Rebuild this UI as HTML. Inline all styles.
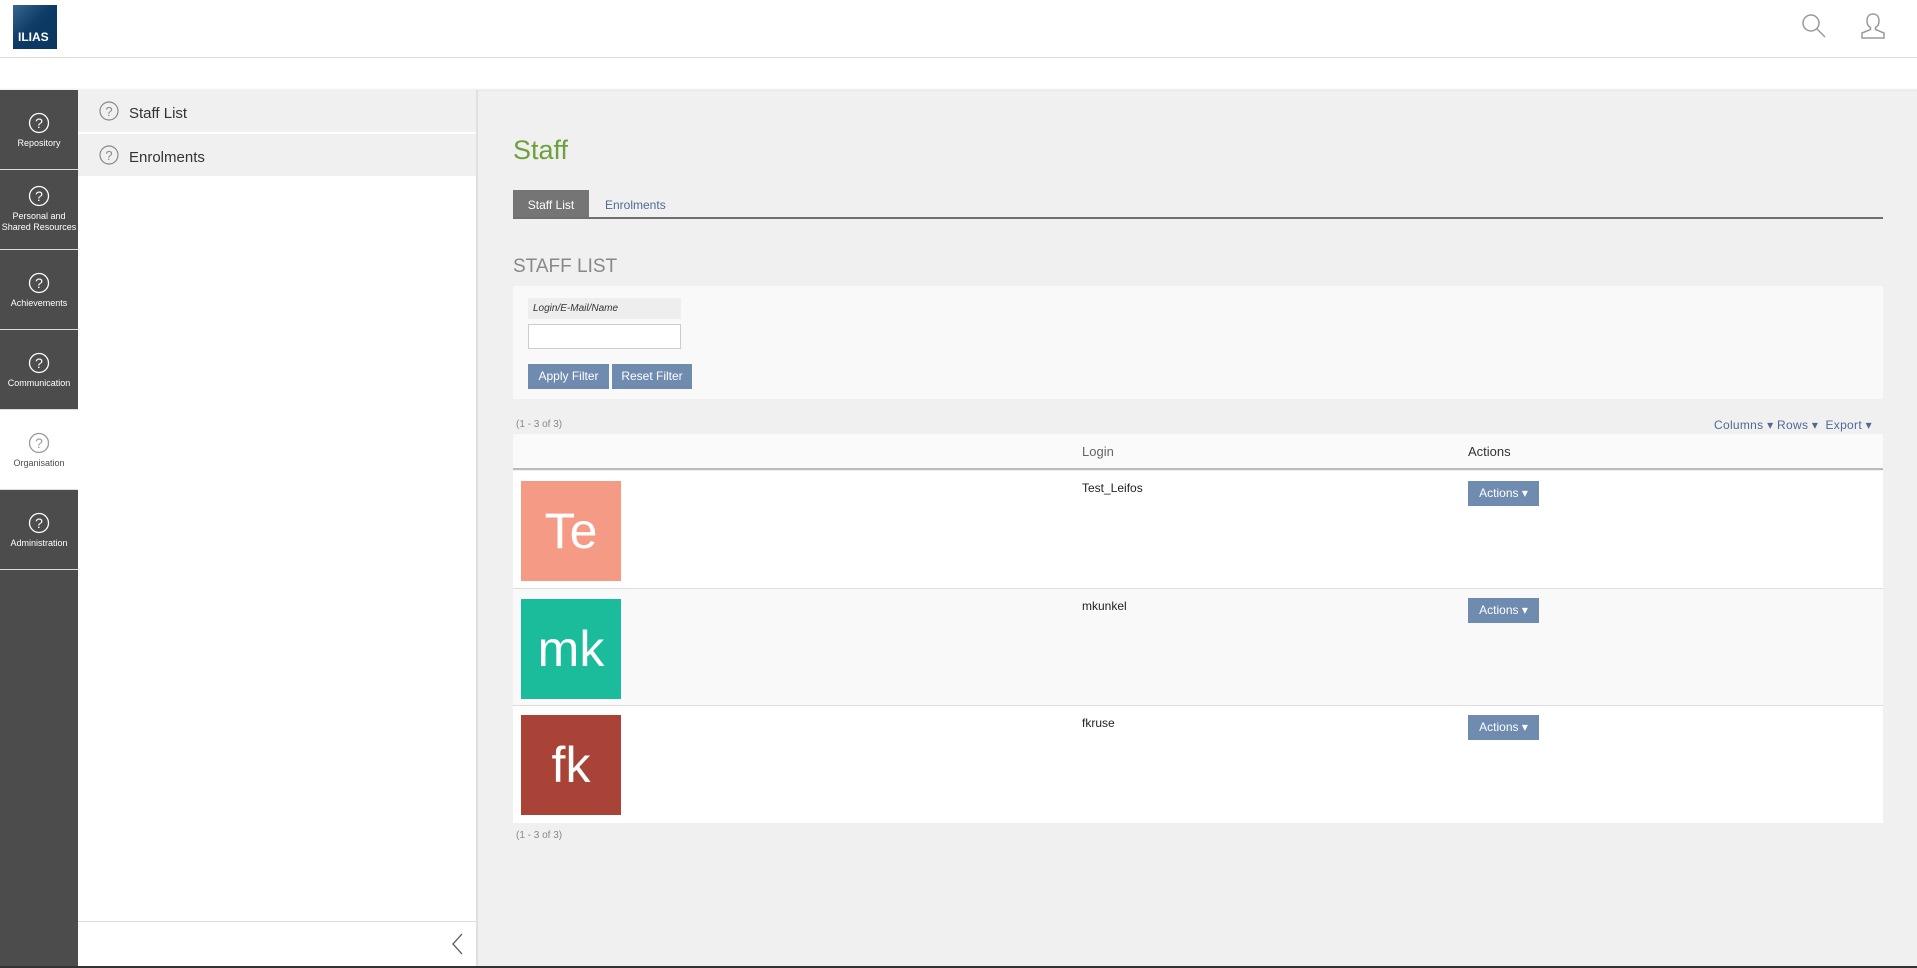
<!DOCTYPE html>
<html><head><meta charset="utf-8"><style>
*{margin:0;padding:0;box-sizing:border-box}
body{width:1917px;height:968px;overflow:hidden;background:#fff;font-family:"Liberation Sans",sans-serif;position:relative}
.a{position:absolute}
.nav{position:absolute;left:0;width:78px;background:#4c4c4c;color:#fff;text-align:center;font-size:9px;line-height:11px;border-bottom:1px solid #ddd;white-space:nowrap}
.nav svg{display:block;margin:0 auto 4px}
.btn{position:absolute;background:#6f8bb0;color:#fff;font-size:12px;line-height:25px;text-align:center}
.row{position:absolute;left:513px;width:1370px;border-bottom:1px solid #ddd}
.av{position:absolute;left:8px;top:10px;width:100px;height:100px;color:#fff;font-size:50px;line-height:100px;text-align:center}
.login{position:absolute;left:569px;top:10px;font-size:12px;color:#222}
</style></head><body>
<div class="a" style="left:13px;top:5px;width:44px;height:44px;background:linear-gradient(135deg,#3a6591 0%,#0d3a66 45%,#0b3660 100%)"></div>
<div class="a" style="left:18px;top:30px;color:#fff;font-weight:bold;font-size:12px">ILIAS</div>
<div class="a" style="left:0;top:57px;width:1917px;height:1px;background:#ddd"></div>
<svg class="a" style="left:1800px;top:12px" width="28" height="28" viewBox="0 0 28 28" fill="none" stroke="#999" stroke-width="1.5"><circle cx="11" cy="11" r="8"/><path d="M17 17l8 8"/></svg>
<svg class="a" style="left:1860px;top:12px" width="26" height="28" viewBox="0 0 26 28" fill="none" stroke="#999" stroke-width="1.5"><path d="M13 2c-4 0-6 3-6 7 0 3 1.5 5.5 3.5 6.5v2L2 21v5h22v-5l-8.5-3.5v-2c2-1 3.5-3.5 3.5-6.5 0-4-2-7-6-7z"/></svg>
<div class="a" style="left:0;top:90px;width:1917px;height:878px;background:#f0f0f0"></div>
<div class="a" style="left:0;top:88px;width:1917px;height:3px;background:linear-gradient(#fff,#e4e4e4)"></div>
<div class="a" style="left:0;top:90px;width:78px;height:878px;background:#4c4c4c"></div>
<div class="nav" style="top:90px;height:80px;padding-top:22px"><svg width="22" height="22" viewBox="0 0 22 22"><circle cx="11" cy="11" r="9.5" fill="none" stroke="#fff" stroke-width="1.3"/><text x="11" y="16" fill="#fff" font-size="14" text-anchor="middle" font-family="Liberation Sans">?</text></svg>Repository</div>
<div class="nav" style="top:170px;height:80px;padding-top:15px"><svg width="22" height="22" viewBox="0 0 22 22"><circle cx="11" cy="11" r="9.5" fill="none" stroke="#fff" stroke-width="1.3"/><text x="11" y="16" fill="#fff" font-size="14" text-anchor="middle" font-family="Liberation Sans">?</text></svg>Personal and<br>Shared Resources</div>
<div class="nav" style="top:250px;height:80px;padding-top:22px"><svg width="22" height="22" viewBox="0 0 22 22"><circle cx="11" cy="11" r="9.5" fill="none" stroke="#fff" stroke-width="1.3"/><text x="11" y="16" fill="#fff" font-size="14" text-anchor="middle" font-family="Liberation Sans">?</text></svg>Achievements</div>
<div class="nav" style="top:330px;height:80px;padding-top:22px"><svg width="22" height="22" viewBox="0 0 22 22"><circle cx="11" cy="11" r="9.5" fill="none" stroke="#fff" stroke-width="1.3"/><text x="11" y="16" fill="#fff" font-size="14" text-anchor="middle" font-family="Liberation Sans">?</text></svg>Communication</div>
<div class="nav" style="top:410px;height:80px;padding-top:22px;background:#fff;color:#4c4c4c"><svg width="22" height="22" viewBox="0 0 22 22"><circle cx="11" cy="11" r="9.5" fill="none" stroke="#999" stroke-width="1.3"/><text x="11" y="16" fill="#999" font-size="14" text-anchor="middle" font-family="Liberation Sans">?</text></svg>Organisation</div>
<div class="nav" style="top:490px;height:80px;padding-top:22px"><svg width="22" height="22" viewBox="0 0 22 22"><circle cx="11" cy="11" r="9.5" fill="none" stroke="#fff" stroke-width="1.3"/><text x="11" y="16" fill="#fff" font-size="14" text-anchor="middle" font-family="Liberation Sans">?</text></svg>Administration</div>
<div class="a" style="left:78px;top:90px;width:400px;height:878px;background:#fff;border-right:2px solid #e0e0e0"></div>
<div class="a" style="left:78px;top:90px;width:398px;height:42px;background:#f0f0f0"></div>
<div class="a" style="left:78px;top:134px;width:398px;height:42px;background:#f0f0f0"></div>
<svg class="a" style="left:99px;top:101px" width="20" height="20" viewBox="0 0 20 20"><circle cx="10" cy="10" r="9" fill="none" stroke="#888" stroke-width="1.2"/><text x="10" y="15" fill="#888" font-size="13" text-anchor="middle" font-family="Liberation Sans">?</text></svg>
<div class="a" style="left:129px;top:105px;font-size:15px;color:#333">Staff List</div>
<svg class="a" style="left:99px;top:145px" width="20" height="20" viewBox="0 0 20 20"><circle cx="10" cy="10" r="9" fill="none" stroke="#888" stroke-width="1.2"/><text x="10" y="15" fill="#888" font-size="13" text-anchor="middle" font-family="Liberation Sans">?</text></svg>
<div class="a" style="left:129px;top:149px;font-size:15px;color:#333">Enrolments</div>
<div class="a" style="left:78px;top:921px;width:398px;height:1px;background:#ddd"></div>
<svg class="a" style="left:450px;top:933px" width="16" height="22" viewBox="0 0 16 22"><path d="M12 1L3 11l9 10" fill="none" stroke="#555" stroke-width="1.3"/></svg>
<div class="a" style="left:513px;top:135px;font-size:27px;color:#6ea03c">Staff</div>
<div class="a" style="left:513px;top:190px;width:76px;height:28px;background:#757575;color:#fff;font-size:12px;line-height:30px;text-align:center">Staff List</div>
<div class="a" style="left:605px;top:198px;font-size:12px;color:#4e6a93">Enrolments</div>
<div class="a" style="left:513px;top:217px;width:1370px;height:2px;background:#6f6f6f"></div>
<div class="a" style="left:513px;top:256px;font-size:19px;color:#888">STAFF LIST</div>
<div class="a" style="left:513px;top:286px;width:1370px;height:113px;background:#f9f9f9"></div>
<div class="a" style="left:528px;top:298px;width:153px;height:21px;background:#eee;font-size:10px;font-style:italic;color:#333;padding:5px 0 0 5px">Login/E-Mail/Name</div>
<div class="a" style="left:528px;top:324px;width:153px;height:25px;background:#fff;border:1px solid #ccc"></div>
<div class="btn" style="left:528px;top:364px;width:81px">Apply Filter</div>
<div class="btn" style="left:612px;top:364px;width:80px">Reset Filter</div>
<div class="a" style="left:516px;top:419px;font-size:10px;color:#888">(1 - 3 of 3)</div>
<div class="a" style="left:1714px;top:418px;font-size:12px;color:#4e6a93;letter-spacing:0.3px">Columns ▾ Rows ▾ &nbsp;Export ▾</div>
<div class="a" style="left:513px;top:434px;width:1370px;height:36px;background:#fafafa;border-bottom:2px solid #bbb"></div>
<div class="a" style="left:1082px;top:444px;font-size:13px;color:#666">Login</div>
<div class="a" style="left:1468px;top:444px;font-size:13px;color:#333">Actions</div>
<div class="row" style="top:471px;height:118px;background:#fff"><div class="av" style="background:#f59a85">Te</div><div class="login">Test_Leifos</div><div class="btn" style="left:955px;top:10px;width:71px">Actions ▾</div></div>
<div class="row" style="top:589px;height:117px;background:#f9f9f9"><div class="av" style="background:#1abc9c">mk</div><div class="login">mkunkel</div><div class="btn" style="left:955px;top:9px;width:71px">Actions ▾</div></div>
<div class="row" style="top:706px;height:117px;background:#fff;border:none"><div class="av" style="background:#a94237;top:9px">fk</div><div class="login">fkruse</div><div class="btn" style="left:955px;top:9px;width:71px">Actions ▾</div></div>
<div class="a" style="left:516px;top:830px;font-size:10px;color:#888">(1 - 3 of 3)</div>
<div class="a" style="left:0;top:966px;width:1917px;height:2px;background:#333"></div>
</body></html>
